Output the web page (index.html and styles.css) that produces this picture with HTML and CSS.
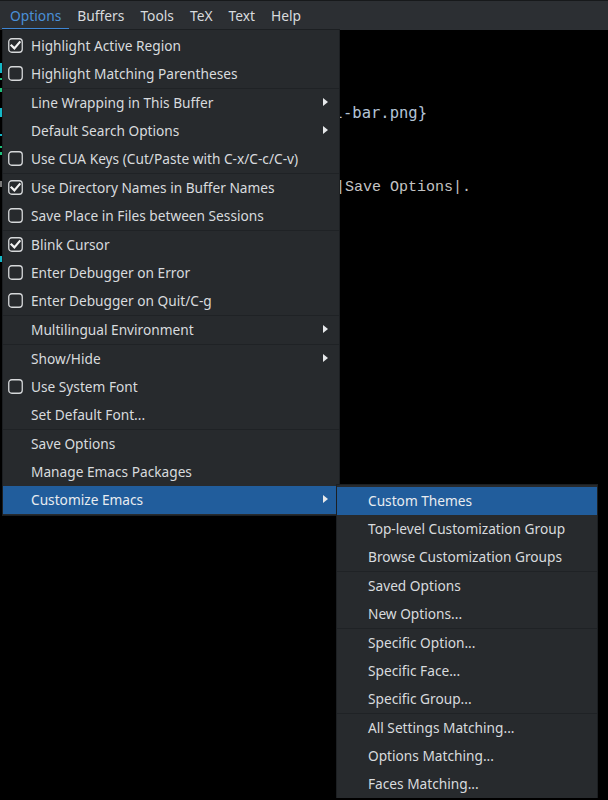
FILE: index.html
```html
<!DOCTYPE html>
<html lang="en">
<head>
<meta charset="utf-8">
<title>Emacs Options menu</title>
<link rel="stylesheet" href="styles.css">
</head>
<body>
<div class="app">
  <header class="menubar">
    <span class="mb-item active">Options</span>
    <span class="mb-item">Buffers</span>
    <span class="mb-item">Tools</span>
    <span class="mb-item">TeX</span>
    <span class="mb-item">Text</span>
    <span class="mb-item">Help</span>
  </header>

  <main class="editor">
    <div class="fringe">
      <i class="fr gap33"></i><i class="fr mark cyan h10"></i>
      <i class="fr gap5"></i><i class="fr mark green h2"></i>
      <i class="fr gap8"></i><i class="fr mark green h4"></i>
      <i class="fr gap16"></i><i class="fr mark cyan h9"></i>
      <i class="fr gap17"></i><i class="fr mark cyan h2"></i>
      <i class="fr gap10"></i><i class="fr mark green h2"></i>
      <i class="fr gap4"></i><i class="fr mark green h3"></i>
      <i class="fr gap26"></i><i class="fr mark grey h6"></i>
      <i class="fr gap69"></i><i class="fr mark cyan h6"></i>
    </div>
    <div class="buffer">
      <div class="line l1"><span class="code">ool-bar.png}</span></div>
      <div class="line l2"><span class="prose">|Save Options|.</span></div>
    </div>
  </main>

  <nav class="menu main-menu">
    <div class="item"><span class="chk on"><svg viewBox="0 0 15 15" width="15" height="15"><rect x="0.75" y="0.75" width="13.5" height="13.5" rx="3" class="box"/><path d="M3.5 7.5 L6.4 10.4 L11.6 4.2" class="tick"/></svg></span><span class="label">Highlight Active Region</span></div>
    <div class="item"><span class="chk"><svg viewBox="0 0 15 15" width="15" height="15"><rect x="0.75" y="0.75" width="13.5" height="13.5" rx="3" class="box"/></svg></span><span class="label">Highlight Matching Parentheses</span></div>
    <div class="sep"></div>
    <div class="item"><span class="chk"></span><span class="label">Line Wrapping in This Buffer</span><span class="arrow"><svg viewBox="0 0 5 8" width="5" height="8"><polygon points="0,0 5,4 0,8"/></svg></span></div>
    <div class="item"><span class="chk"></span><span class="label">Default Search Options</span><span class="arrow"><svg viewBox="0 0 5 8" width="5" height="8"><polygon points="0,0 5,4 0,8"/></svg></span></div>
    <div class="item"><span class="chk"><svg viewBox="0 0 15 15" width="15" height="15"><rect x="0.75" y="0.75" width="13.5" height="13.5" rx="3" class="box"/></svg></span><span class="label">Use CUA Keys (Cut/Paste with C-x/C-c/C-v)</span></div>
    <div class="sep"></div>
    <div class="item"><span class="chk on"><svg viewBox="0 0 15 15" width="15" height="15"><rect x="0.75" y="0.75" width="13.5" height="13.5" rx="3" class="box"/><path d="M3.5 7.5 L6.4 10.4 L11.6 4.2" class="tick"/></svg></span><span class="label">Use Directory Names in Buffer Names</span></div>
    <div class="item"><span class="chk"><svg viewBox="0 0 15 15" width="15" height="15"><rect x="0.75" y="0.75" width="13.5" height="13.5" rx="3" class="box"/></svg></span><span class="label">Save Place in Files between Sessions</span></div>
    <div class="sep"></div>
    <div class="item"><span class="chk on"><svg viewBox="0 0 15 15" width="15" height="15"><rect x="0.75" y="0.75" width="13.5" height="13.5" rx="3" class="box"/><path d="M3.5 7.5 L6.4 10.4 L11.6 4.2" class="tick"/></svg></span><span class="label">Blink Cursor</span></div>
    <div class="item"><span class="chk"><svg viewBox="0 0 15 15" width="15" height="15"><rect x="0.75" y="0.75" width="13.5" height="13.5" rx="3" class="box"/></svg></span><span class="label">Enter Debugger on Error</span></div>
    <div class="item"><span class="chk"><svg viewBox="0 0 15 15" width="15" height="15"><rect x="0.75" y="0.75" width="13.5" height="13.5" rx="3" class="box"/></svg></span><span class="label">Enter Debugger on Quit/C-g</span></div>
    <div class="sep"></div>
    <div class="item"><span class="chk"></span><span class="label">Multilingual Environment</span><span class="arrow"><svg viewBox="0 0 5 8" width="5" height="8"><polygon points="0,0 5,4 0,8"/></svg></span></div>
    <div class="sep"></div>
    <div class="item"><span class="chk"></span><span class="label">Show/Hide</span><span class="arrow"><svg viewBox="0 0 5 8" width="5" height="8"><polygon points="0,0 5,4 0,8"/></svg></span></div>
    <div class="item"><span class="chk"><svg viewBox="0 0 15 15" width="15" height="15"><rect x="0.75" y="0.75" width="13.5" height="13.5" rx="3" class="box"/></svg></span><span class="label">Use System Font</span></div>
    <div class="item"><span class="chk"></span><span class="label">Set Default Font...</span></div>
    <div class="sep"></div>
    <div class="item"><span class="chk"></span><span class="label">Save Options</span></div>
    <div class="item"><span class="chk"></span><span class="label">Manage Emacs Packages</span></div>
    <div class="item selected"><span class="chk"></span><span class="label">Customize Emacs</span><span class="arrow"><svg viewBox="0 0 5 8" width="5" height="8"><polygon points="0,0 5,4 0,8"/></svg></span></div>
  </nav>

  <nav class="menu sub-menu">
    <div class="item selected"><span class="label">Custom Themes</span></div>
    <div class="item"><span class="label">Top-level Customization Group</span></div>
    <div class="item"><span class="label">Browse Customization Groups</span></div>
    <div class="sep"></div>
    <div class="item"><span class="label">Saved Options</span></div>
    <div class="item"><span class="label">New Options...</span></div>
    <div class="sep"></div>
    <div class="item"><span class="label">Specific Option...</span></div>
    <div class="item"><span class="label">Specific Face...</span></div>
    <div class="item"><span class="label">Specific Group...</span></div>
    <div class="sep"></div>
    <div class="item"><span class="label">All Settings Matching...</span></div>
    <div class="item"><span class="label">Options Matching...</span></div>
    <div class="item"><span class="label">Faces Matching...</span></div>
  </nav>
</div>
</body>
</html>
```

FILE: styles.css
```css
* { box-sizing: border-box; }

html, body {
  margin: 0;
  padding: 0;
  background: #000;
}

body {
  width: 608px;
  height: 800px;
  overflow: hidden;
  font-family: "Noto Sans", "Open Sans", sans-serif;
  font-size: 13.7px;
  color: #d8dbde;
}

.app {
  position: relative;
  width: 608px;
  height: 800px;
  display: flex;
  flex-direction: column;
}

/* ---------- menu bar ---------- */
.menubar {
  height: 30px;
  flex: none;
  display: flex;
  align-items: stretch;
  padding-left: 2px;
  background: #2c2f33;
  border-top: 1px solid #17191b;
}

.mb-item {
  display: flex;
  align-items: center;
  padding: 1px 8px 0;
  border-bottom: 2px solid transparent;
  color: #d8dbde;
  font-size: 13.8px;
}

.mb-item.active {
  color: #4a8fd8;
  border-bottom-color: #3f86d4;
}

/* ---------- editor ---------- */
.editor {
  flex: 1;
  display: flex;
  background: #000;
}

.fringe {
  width: 2px;
  flex: none;
  display: flex;
  flex-direction: column;
}

.fr { display: block; width: 2px; font-style: normal; }
.mark.cyan { background: #14b8c8; }
.mark.green { background: #1fc07c; }
.mark.grey { background: #7a7a7a; }
.h2 { height: 2px; }
.h3 { height: 3px; }
.h4 { height: 4px; }
.h6 { height: 6px; }
.h9 { height: 9px; }
.h10 { height: 10px; }
.gap4 { height: 4px; }
.gap5 { height: 5px; }
.gap8 { height: 8px; }
.gap10 { height: 10px; }
.gap16 { height: 16px; }
.gap17 { height: 17px; }
.gap26 { height: 26px; }
.gap33 { height: 33px; }
.gap69 { height: 69px; }

.buffer {
  flex: 1;
  display: flex;
  flex-direction: column;
}

.line {
  white-space: pre;
  height: 20px;
  line-height: 20px;
}

.l1 {
  margin-top: 73px;
  padding-left: 313px;
}

.l2 {
  margin-top: 53px;
  padding-left: 334px;
}

.code {
  font-family: "DejaVu Sans Mono", monospace;
  font-size: 15.5px;
  color: #b3c3d6;
}

.prose {
  font-family: "Liberation Mono", monospace;
  font-size: 15px;
  color: #c4c4c4;
}

/* ---------- menus ---------- */
.menu {
  position: absolute;
  display: flex;
  flex-direction: column;
  background: #272a2d;
  border: 1px solid #1c1f22;
}

.main-menu {
  left: 2px;
  top: 29px;
  width: 338px;
  padding: 2px 0 1px;
}

.sub-menu {
  left: 336px;
  top: 484px;
  width: 262px;
  padding: 2px 0 0;
  border-bottom: none;
}

.item {
  height: 28px;
  display: flex;
  align-items: center;
  white-space: nowrap;
  padding-bottom: 2px;
}

.main-menu .item {
  padding-right: 11px;
}

.sub-menu .item {
  padding-left: 31px;
}

.item.selected {
  background: #215d9c;
  color: #e8ecf0;
}

.chk {
  width: 28px;
  flex: none;
  display: flex;
  align-items: center;
  padding-left: 5px;
  height: 15px;
}

.chk svg { display: block; }

.box {
  fill: none;
  stroke: #d6d8da;
  stroke-width: 1.3;
}

.tick {
  fill: none;
  stroke: #f2f2f2;
  stroke-width: 2.2;
  stroke-linecap: square;
  stroke-linejoin: miter;
}

.label {
  flex: 1;
}

.arrow {
  flex: none;
  display: flex;
  align-items: center;
}

.arrow svg { display: block; }
.arrow polygon { fill: #e6e8ea; }

.sep {
  height: 1px;
  flex: none;
  background: #1f2225;
}
```
